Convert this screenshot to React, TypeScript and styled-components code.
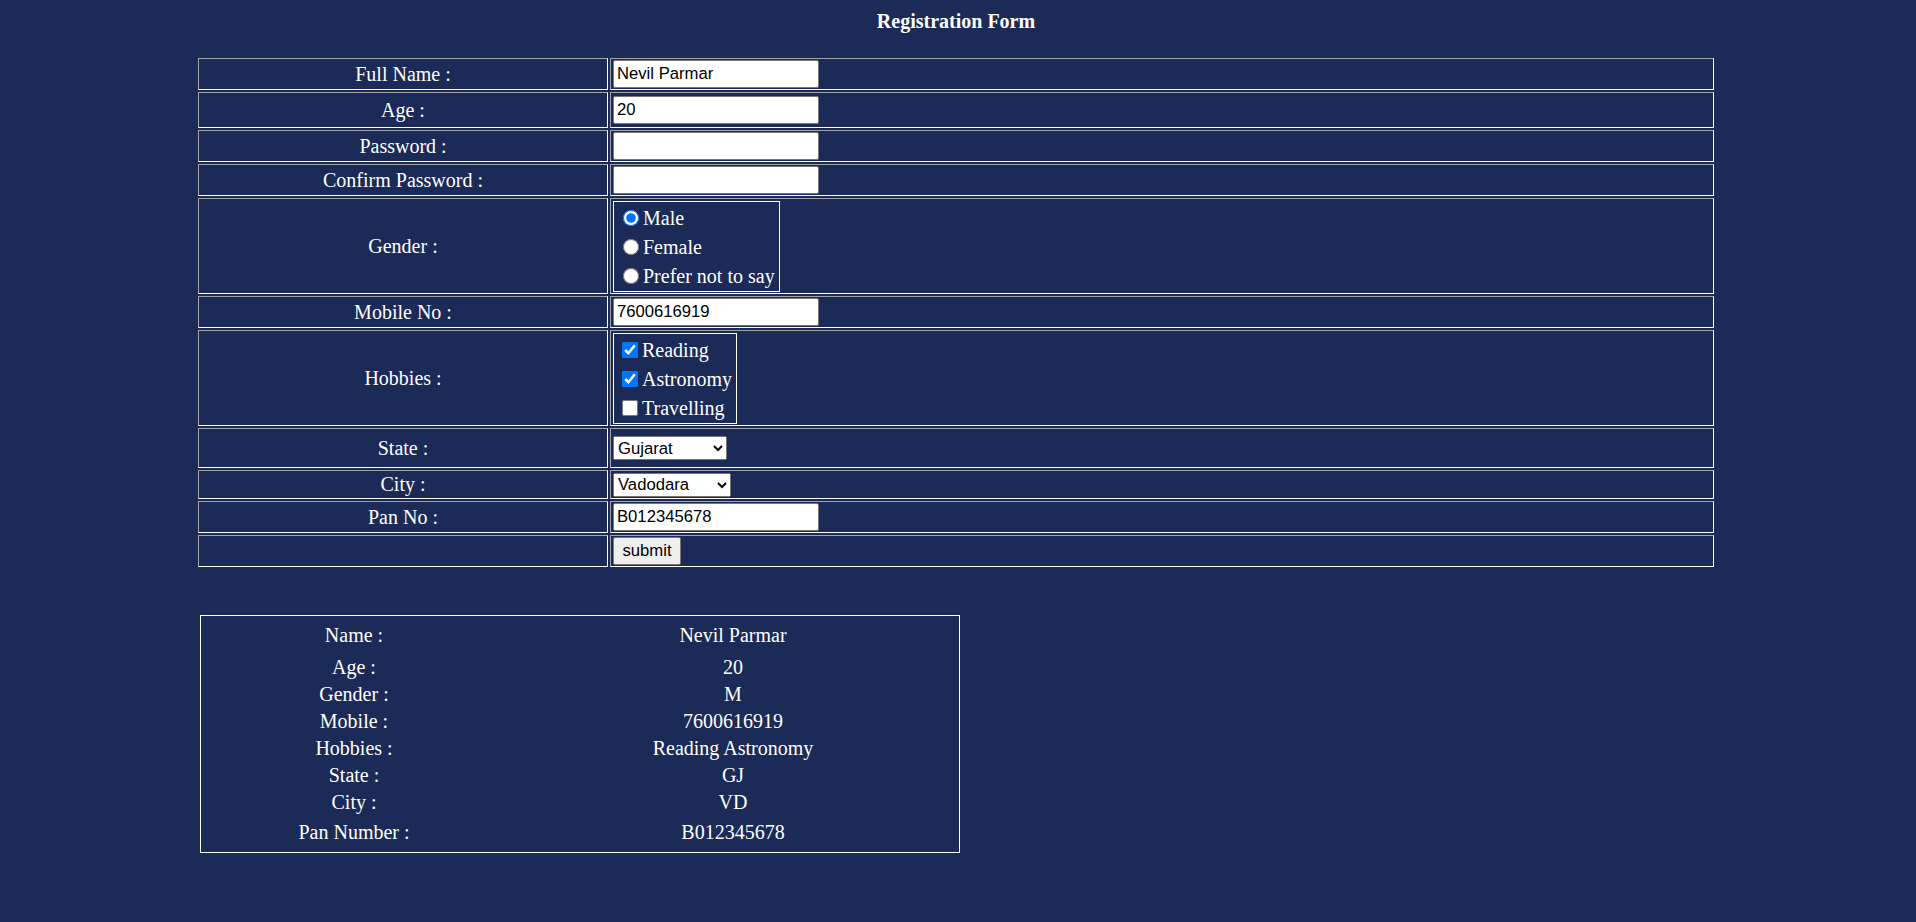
import { Fragment } from 'react';
import styled, { createGlobalStyle } from 'styled-components';

const GlobalStyle = createGlobalStyle`
    * {
        box-sizing: border-box;
    }
    body {
        margin: 0;
        background-color: #1b2a56;
        color: #fff;
        font-family: "Liberation Serif", "Times New Roman", serif;
        font-size: 20px;
    }
`;

const summary = [
    { label: 'Age :', value: '20' },
    { label: 'Gender :', value: 'M' },
    { label: 'Mobile :', value: '7600616919' },
    { label: 'Hobbies :', value: 'Reading Astronomy' },
    { label: 'State :', value: 'GJ' },
    { label: 'City :', value: 'VD' },
];

export default function App() {
    return (
        <Page>
            <GlobalStyle />
            <Title>Registration Form</Title>

            <FormTable>
                <tbody>
                    <Row $h={32}>
                        <LabelCell>Full Name :</LabelCell>
                        <Cell><TextInput type="text" defaultValue="Nevil Parmar" /></Cell>
                    </Row>
                    <Row $h={36}>
                        <LabelCell>Age :</LabelCell>
                        <Cell><TextInput type="text" defaultValue="20" /></Cell>
                    </Row>
                    <Row $h={32}>
                        <LabelCell>Password :</LabelCell>
                        <Cell><TextInput type="password" /></Cell>
                    </Row>
                    <Row $h={32}>
                        <LabelCell>Confirm Password :</LabelCell>
                        <Cell><TextInput type="password" /></Cell>
                    </Row>
                    <Row $h={96}>
                        <LabelCell>Gender :</LabelCell>
                        <Cell>
                            <ChoiceBox>
                                <Choice><Radio type="radio" name="gender" defaultChecked />Male</Choice>
                                <Choice><Radio type="radio" name="gender" />Female</Choice>
                                <Choice><Radio type="radio" name="gender" />Prefer not to say</Choice>
                            </ChoiceBox>
                        </Cell>
                    </Row>
                    <Row $h={32}>
                        <LabelCell>Mobile No :</LabelCell>
                        <Cell><TextInput type="text" defaultValue="7600616919" /></Cell>
                    </Row>
                    <Row $h={96}>
                        <LabelCell>Hobbies :</LabelCell>
                        <Cell>
                            <ChoiceBox>
                                <Choice><Check type="checkbox" defaultChecked />Reading</Choice>
                                <Choice><Check type="checkbox" defaultChecked />Astronomy</Choice>
                                <Choice><Check type="checkbox" />Travelling</Choice>
                            </ChoiceBox>
                        </Cell>
                    </Row>
                    <Row $h={40}>
                        <LabelCell>State :</LabelCell>
                        <Cell>
                            <Select $w={114} defaultValue="GJ">
                                <option value="GJ">Gujarat</option>
                                <option value="MH">Maharashtra</option>
                            </Select>
                        </Cell>
                    </Row>
                    <Row $h={29}>
                        <LabelCell>City :</LabelCell>
                        <Cell>
                            <Select $w={118} defaultValue="VD">
                                <option value="VD">Vadodara</option>
                                <option value="AM">Ahmedabad</option>
                            </Select>
                        </Cell>
                    </Row>
                    <Row $h={32}>
                        <LabelCell>Pan No :</LabelCell>
                        <Cell><TextInput type="text" defaultValue="B012345678" /></Cell>
                    </Row>
                    <Row $h={32}>
                        <LabelCell></LabelCell>
                        <Cell><SubmitButton type="button">submit</SubmitButton></Cell>
                    </Row>
                </tbody>
            </FormTable>

            <Summary>
                <SummaryCell>Name :</SummaryCell>
                <SummaryCell>Nevil Parmar</SummaryCell>
                {summary.map((s) => (
                    <Fragment key={s.label}>
                        <SummaryCell>{s.label}</SummaryCell>
                        <SummaryCell>{s.value}</SummaryCell>
                    </Fragment>
                ))}
                <SummaryCell>Pan Number :</SummaryCell>
                <SummaryCell>B012345678</SummaryCell>
            </Summary>
        </Page>
    )
}

const Page = styled.div`
    width: 1912px;
    padding: 10px 0 60px;
`;

const Title = styled.h4`
    margin: 0;
    text-align: center;
    font-size: 20px;
    line-height: 23px;
    font-weight: bold;
`;

const FormTable = styled.table`
    width: 1520px;
    margin: 23px auto 0;
    border-spacing: 2px;
    table-layout: fixed;
`;

const Row = styled.tr<{ $h: number }>`
    height: ${({ $h }) => $h}px;
`;

const Cell = styled.td`
    padding: 1px 2px;
    border: 1px solid;
    border-color: #a3a3a3 #fff #fff #a3a3a3;
    vertical-align: middle;
`;

const LabelCell = styled(Cell)`
    width: 410px;
    text-align: center;
`;

const TextInput = styled.input`
    display: block;
    width: 206px;
    height: 28px;
    padding: 1px 3px;
    border: 1px solid #767676;
    border-radius: 2px;
    background: #fff;
    color: #000;
    font-family: "Liberation Sans", Arial, sans-serif;
    font-size: 16.67px;
`;

const ChoiceBox = styled.div`
    display: flex;
    flex-direction: column;
    width: fit-content;
    height: 91px;
    padding: 2px 4px 0 3px;
    border: 1px solid #fff;
`;

const Choice = styled.label`
    display: flex;
    align-items: center;
    height: 29px;
    white-space: nowrap;
`;

const Radio = styled.input`
    width: 16px;
    height: 16px;
    margin: 0 4px 0 6px;
`;

const Check = styled.input`
    width: 16px;
    height: 16px;
    margin: 0 4px 0 5px;
`;

const Select = styled.select<{ $w: number }>`
    display: block;
    width: ${({ $w }) => $w}px;
    height: 24px;
    font-family: "Liberation Sans", Arial, sans-serif;
    font-size: 16.67px;
    color: #000;
`;

const SubmitButton = styled.button`
    display: block;
    width: 68px;
    height: 28px;
    padding: 1px 6px;
    background-color: #efefef;
    border: 1px solid #767676;
    border-radius: 2px;
    color: #000;
    font-family: "Liberation Sans", Arial, sans-serif;
    font-size: 16.67px;
`;

const Summary = styled.div`
    display: grid;
    grid-template-columns: 306px 1fr;
    grid-template-rows: 38px repeat(6, 27px) 32px;
    width: 760px;
    margin: 46px 0 0 200px;
    padding: 0 0 4px;
    border: 1px solid #fff;
`;

const SummaryCell = styled.div`
    display: flex;
    align-items: center;
    justify-content: center;
    white-space: nowrap;
`;
